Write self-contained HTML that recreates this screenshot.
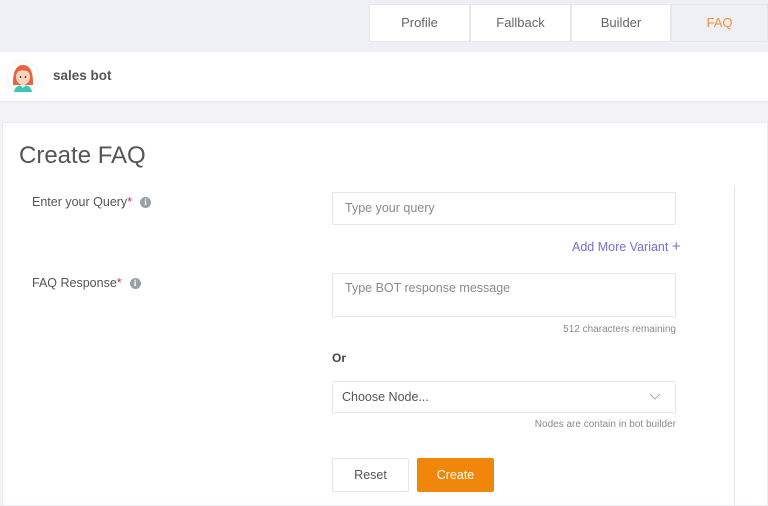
<!DOCTYPE html>
<html><head><style>
*{margin:0;padding:0;box-sizing:border-box}
body{width:768px;height:506px;overflow:hidden;background:#f3f3f6;font-family:"Liberation Sans",sans-serif;position:relative;color:#555}
.a{position:absolute}
.top{left:0;top:0;width:768px;height:52px;background:#eef0f5}
.tab{top:4px;height:38px;background:#fff;border:1px solid #e6e8ee;font-size:13px;color:#666;text-align:center;line-height:36px}
.hdr{left:0;top:52px;width:768px;height:50px;background:#fff;border-bottom:1px solid #e8e8ec}
.card{left:2px;top:122px;width:766px;height:384px;background:#fff;border:1px solid #ececf0}
.in{border:1px solid #e6e6ea;border-radius:2px;background:#fff;font-size:12.5px;color:#8a8a8a;padding-left:12px}
.lbl{font-size:12.5px;color:#555}
.req{color:#e0245e}
.info{display:inline-block;width:11px;height:11px;border-radius:50%;background:#9aa0a8;color:#fff;font-size:9px;font-weight:bold;text-align:center;line-height:11px;font-family:"Liberation Serif",serif;vertical-align:1px;margin-left:8px}
.small{font-size:10px;color:#8a8a8a;text-align:right;width:344px;left:332px}
</style></head><body>
<div class="a top"></div>
<div class="a tab" style="left:369px;width:101px">Profile</div>
<div class="a tab" style="left:470px;width:101px">Fallback</div>
<div class="a tab" style="left:571px;width:100px">Builder</div>
<div class="a tab" style="left:671px;width:97px;background:#eef0f5;color:#f39133">FAQ</div>
<div class="a hdr"></div>
<svg class="a" style="left:6px;top:60px" width="34" height="34" viewBox="0 0 34 34">
<circle cx="17" cy="17" r="16" fill="#fff" stroke="#f2f2f2"/>
<path d="M7 23 Q7 5 17 5 Q27 5 27 23 L27 25 L7 25Z" fill="#e8623f"/>
<ellipse cx="17" cy="17" rx="7" ry="8" fill="#f6d4b8"/>
<path d="M10 14 Q13 8 24 12 L24 9 Q17 4 10 9Z" fill="#e8623f"/>
<circle cx="14.5" cy="17" r="0.9" fill="#333"/><circle cx="19.5" cy="17" r="0.9" fill="#333"/>
<path d="M8 32 Q9 25 17 25 Q25 25 26 32Z" fill="#3cc6b5"/>
<path d="M14 25 L17 28 L20 25Z" fill="#fff"/>
</svg>
<div class="a" style="left:53px;top:68px;font-size:13.5px;font-weight:bold;color:#555">sales bot</div>
<div class="a card"></div>
<div class="a" style="left:19px;top:142px;font-size:24px;color:#555">Create FAQ</div>
<div class="a" style="left:734px;top:186px;width:1px;height:320px;background:#e4e4f0"></div>
<div class="a lbl" style="left:32px;top:195px">Enter your Query<span class="req">*</span><span class="info">i</span></div>
<div class="a lbl" style="left:32px;top:276px">FAQ Response<span class="req">*</span><span class="info">i</span></div>
<div class="a in" style="left:332px;top:192px;width:344px;height:33px;line-height:31px">Type your query</div>
<div class="a" style="left:572px;top:238px;font-size:12.5px;color:#7b6fd0">Add More Variant <span style="font-size:15px">+</span></div>
<div class="a in" style="left:332px;top:273px;width:344px;height:44px;padding-top:7px">Type BOT response message</div>
<div class="a small" style="top:324px">512 characters remaining</div>
<div class="a" style="left:332px;top:351px;font-size:12px;font-weight:bold;color:#444">Or</div>
<div class="a in" style="left:332px;top:381px;width:344px;height:32px;line-height:30px;color:#555;padding-left:9px">Choose Node...
<svg class="a" style="left:316px;top:11px" width="12" height="8"><path d="M1 1 L6 6 L11 1" fill="none" stroke="#aaa" stroke-width="1"/></svg></div>
<div class="a small" style="top:419px">Nodes are contain in bot builder</div>
<div class="a in" style="left:332px;top:458px;width:77px;height:34px;line-height:32px;text-align:center;padding:0;color:#555">Reset</div>
<div class="a" style="left:417px;top:458px;width:77px;height:34px;line-height:34px;text-align:center;background:#f0870b;color:#fff;font-size:12.5px;border-radius:2px">Create</div>
</body></html>
